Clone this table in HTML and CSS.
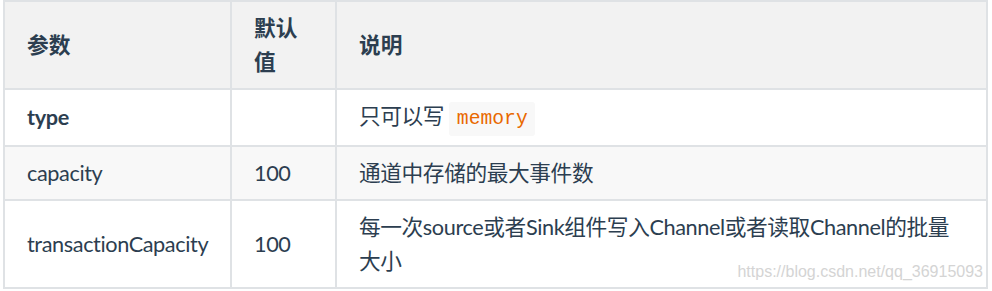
FILE: index.html
```html
<!DOCTYPE html>
<html lang="zh-CN">
<head>
<meta charset="utf-8">
<title>参数</title>
<link rel="stylesheet" href="styles.css">
</head>
<body>
<table class="params">
  <colgroup><col class="c1"><col class="c2"><col class="c3"></colgroup>
  <thead>
    <tr><th>参数</th><th>默认值</th><th>说明</th></tr>
  </thead>
  <tbody>
    <tr><td><strong>type</strong></td><td></td><td>只可以写 <code>memory</code></td></tr>
    <tr><td>capacity</td><td>100</td><td>通道中存储的最大事件数</td></tr>
    <tr><td>transactionCapacity</td><td>100</td><td>每一次source或者Sink组件写入Channel或者读取Channel的批量大小</td></tr>
  </tbody>
</table>
<div class="watermark">https://blog.csdn.net/qq_36915093</div>
</body>
</html>
```
FILE: styles.css
```css
html, body {
  margin: 0;
  background: #ffffff;
}
body {
  position: relative;
  font-family: "Lato", "Noto Sans CJK SC", sans-serif;
  color: #2c3e50;
}
.params {
  border-collapse: separate;
  border-spacing: 0;
  table-layout: fixed;
  width: 985px;
  margin-left: 3px;
  border-top: 2px solid #dfe2e5;
  border-left: 2px solid #dfe2e5;
  font-size: 21.7px;
  line-height: 34px;
}
.c1 { width: 227px; }
.c2 { width: 105px; }
.c3 { width: 651px; }
.params th,
.params td {
  border-right: 2px solid #dfe2e5;
  border-bottom: 2px solid #dfe2e5;
  padding: 9px 22px;
  text-align: left;
  vertical-align: middle;
}
.params td {
  letter-spacing: -0.4px;
}
.params th {
  background: #f2f2f2;
  font-weight: 700;
}
.params tbody tr:nth-child(2) td {
  background: #f8f8f8;
}
.params strong {
  font-weight: 700;
}
.params code {
  display: inline-block;
  font-family: "Liberation Mono", monospace;
  font-size: 19.7px;
  line-height: 34px;
  padding: 0 7.5px;
  letter-spacing: 0;
  color: #e96900;
  background: #f8f8f8;
  border-radius: 3px;
  vertical-align: middle;
}
.watermark {
  position: absolute;
  right: 9px;
  top: 264px;
  font-family: "Liberation Sans", Arial, sans-serif;
  font-size: 16px;
  line-height: 16px;
  color: #d4d4d4;
}
```
